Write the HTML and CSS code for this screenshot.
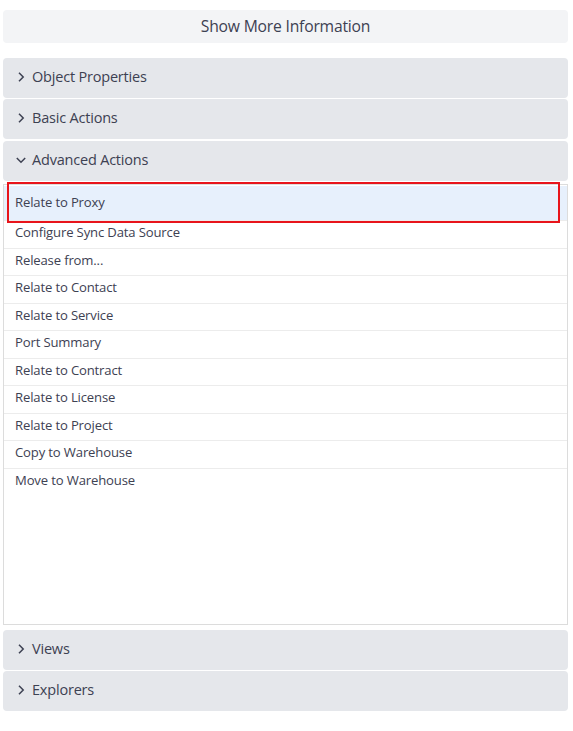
FILE: index.html
```html
<!DOCTYPE html>
<html>
<head>
<meta charset="utf-8">
<link rel="stylesheet" href="styles.css">
</head>
<body>
<div class="wrap">
  <button class="more">Show More Information</button>
  <div class="accordion">
    <div class="hdr"><svg class="chev" viewBox="0 0 12 12"><path d="M4 1.8 L8.2 6 L4 10.2"/></svg><span>Object Properties</span></div>
    <div class="hdr"><svg class="chev" viewBox="0 0 12 12"><path d="M4 1.8 L8.2 6 L4 10.2"/></svg><span>Basic Actions</span></div>
    <div class="hdr open"><svg class="chev" viewBox="0 0 12 12"><path d="M1.8 4 L6 8.2 L10.2 4"/></svg><span>Advanced Actions</span></div>
    <div class="panel">
      <div class="item first">Relate to Proxy<div class="focus"></div></div>
      <div class="item">Configure Sync Data Source</div>
      <div class="item">Release from...</div>
      <div class="item">Relate to Contact</div>
      <div class="item">Relate to Service</div>
      <div class="item">Port Summary</div>
      <div class="item">Relate to Contract</div>
      <div class="item">Relate to License</div>
      <div class="item">Relate to Project</div>
      <div class="item">Copy to Warehouse</div>
      <div class="item last">Move to Warehouse</div>
    </div>
    <div class="hdr"><svg class="chev" viewBox="0 0 12 12"><path d="M4 1.8 L8.2 6 L4 10.2"/></svg><span>Views</span></div>
    <div class="hdr"><svg class="chev" viewBox="0 0 12 12"><path d="M4 1.8 L8.2 6 L4 10.2"/></svg><span>Explorers</span></div>
  </div>
</div>
</body>
</html>
```
FILE: styles.css
```css
html, body { margin: 0; padding: 0; background: #fff; }
body { font-family: "Open Sans", "Noto Sans", sans-serif; color: #3d4152; }
.wrap { padding: 10px 5px 0 3px; display: flex; flex-direction: column; }
.more {
  height: 33px; border: none; border-radius: 4px; background: #f3f4f6;
  font-family: inherit; font-size: 15.7px; color: #3d4152; padding: 0 0 2px;
  letter-spacing: -0.2px;
}
.accordion { margin-top: 15px; display: flex; flex-direction: column; gap: 1px; }
.hdr {
  height: 40px; box-sizing: border-box; background: #e5e7eb; border-radius: 4px;
  display: flex; align-items: center; padding: 0 0 3px 12px; gap: 5px;
  font-size: 14.5px; letter-spacing: -0.2px;
}
.hdr.open { margin-top: 1px; }
.chev { width: 12px; height: 12px; fill: none; stroke: #3d4152; stroke-width: 1.5; }
.panel {
  margin-top: 2px; margin-bottom: 4px; height: 439px; border: 1px solid #dcdcdc;
  background: #fff; display: flex; flex-direction: column;
}
.item {
  position: relative; height: 27.5px; box-sizing: border-box; padding: 0 0 4px 11px;
  display: flex; align-items: center; font-size: 13.1px; letter-spacing: -0.15px;
  border-bottom: 1px solid #ececec;
}
.item.last { border-bottom: none; }
.item.first { height: 35px; margin-top: 1px; background: #e7f0fc; padding-bottom: 3px; }
.focus {
  position: absolute; left: 3px; right: 7px; top: -4px; bottom: -3px;
  border: 2px solid #e8141b;
}
```
